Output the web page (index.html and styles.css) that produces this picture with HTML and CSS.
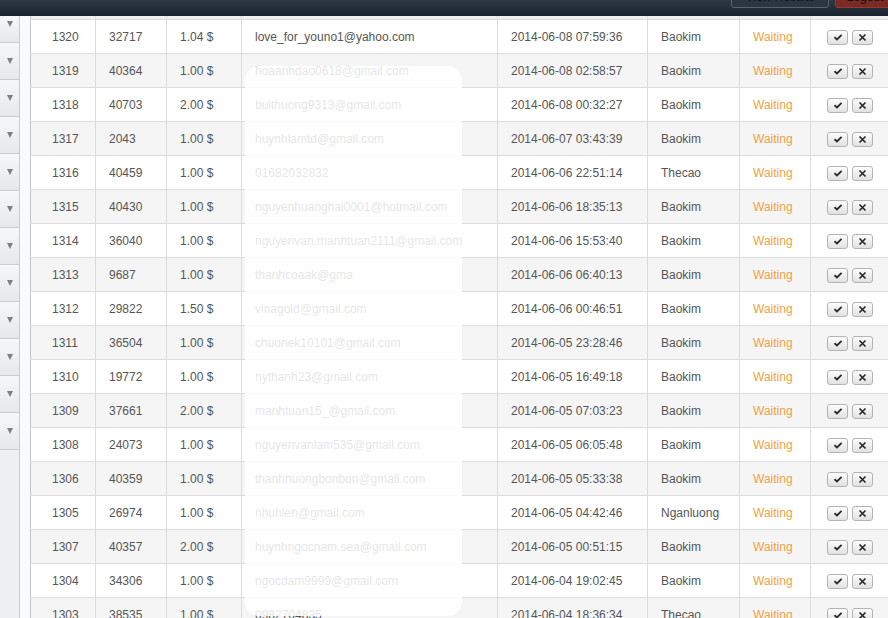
FILE: index.html
```html
<!DOCTYPE html>
<html lang="en">
<head>
  <meta charset="UTF-8">
  <title>Orders</title>
  <link rel="stylesheet" href="styles.css">
</head>
<body>
  <div class="topbar">
    <button class="top-btn view">View Results</button>
    <button class="top-btn logout">Logout</button>
  </div>

  <div class="main">
    <div class="sidebar">
      <div class="side-item first"><span class="arrow"></span></div>
      <div class="side-item"><span class="arrow"></span></div>
      <div class="side-item"><span class="arrow"></span></div>
      <div class="side-item"><span class="arrow"></span></div>
      <div class="side-item"><span class="arrow"></span></div>
      <div class="side-item"><span class="arrow"></span></div>
      <div class="side-item"><span class="arrow"></span></div>
      <div class="side-item"><span class="arrow"></span></div>
      <div class="side-item"><span class="arrow"></span></div>
      <div class="side-item"><span class="arrow"></span></div>
      <div class="side-item"><span class="arrow"></span></div>
      <div class="side-item"><span class="arrow"></span></div>
    </div>

    <div class="content">
      <table class="orders">
        <colgroup>
          <col style="width:65px">
          <col style="width:71px">
          <col style="width:75px">
          <col style="width:256px">
          <col style="width:150px">
          <col style="width:92px">
          <col style="width:71px">
          <col style="width:90px">
        </colgroup>
        <thead>
          <tr><th></th><th></th><th></th><th></th><th></th><th></th><th></th><th></th></tr>
        </thead>
        <tbody id="rows"></tbody>
      </table>
    </div>
  </div>

  <div class="privacy"></div>

  <script>
    const orders = [
      ['1320', '32717', '1.04 $', 'love_for_youno1@yahoo.com', '2014-06-08 07:59:36', 'Baokim'],
      ['1319', '40364', '1.00 $', 'hoaanhdao0618@gmail.com', '2014-06-08 02:58:57', 'Baokim'],
      ['1318', '40703', '2.00 $', 'buithuong9313@gmail.com', '2014-06-08 00:32:27', 'Baokim'],
      ['1317', '2043', '1.00 $', 'huynhlamtd@gmail.com', '2014-06-07 03:43:39', 'Baokim'],
      ['1316', '40459', '1.00 $', '01682032832', '2014-06-06 22:51:14', 'Thecao'],
      ['1315', '40430', '1.00 $', 'nguyenhuanghai0001@hotmail.com', '2014-06-06 18:35:13', 'Baokim'],
      ['1314', '36040', '1.00 $', 'nguyenvan.manhtuan2111@gmail.com', '2014-06-06 15:53:40', 'Baokim'],
      ['1313', '9687', '1.00 $', 'thanhcoaak@gma', '2014-06-06 06:40:13', 'Baokim'],
      ['1312', '29822', '1.50 $', 'vinagold@gmail.com', '2014-06-06 00:46:51', 'Baokim'],
      ['1311', '36504', '1.00 $', 'chuonek10101@gmail.com', '2014-06-05 23:28:46', 'Baokim'],
      ['1310', '19772', '1.00 $', 'nythanh23@gmail.com', '2014-06-05 16:49:18', 'Baokim'],
      ['1309', '37661', '2.00 $', 'manhtuan15_@gmail.com', '2014-06-05 07:03:23', 'Baokim'],
      ['1308', '24073', '1.00 $', 'nguyenvanlam535@gmail.com', '2014-06-05 06:05:48', 'Baokim'],
      ['1306', '40359', '1.00 $', 'thanhhuongbonbon@gmail.com', '2014-06-05 05:33:38', 'Baokim'],
      ['1305', '26974', '1.00 $', 'nhuhien@gmail.com', '2014-06-05 04:42:46', 'Nganluong'],
      ['1307', '40357', '2.00 $', 'huynhngocnam.sea@gmail.com', '2014-06-05 00:51:15', 'Baokim'],
      ['1304', '34306', '1.00 $', 'ngocdam9999@gmail.com', '2014-06-04 19:02:45', 'Baokim'],
      ['1303', '38535', '1.00 $', '0982704835', '2014-06-04 18:36:34', 'Thecao']
    ];

    const checkIcon = '<svg width="10" height="8" viewBox="0 0 10 8"><path d="M1.5 4.2 L4 6.4 L8.6 1.8" fill="none" stroke="#2b2b2b" stroke-width="1.8"/></svg>';
    const crossIcon = '<svg width="9" height="9" viewBox="0 0 9 9"><path d="M1.5 1.5 L7.5 7.5 M7.5 1.5 L1.5 7.5" fill="none" stroke="#2b2b2b" stroke-width="1.7"/></svg>';

    const tbody = document.getElementById('rows');
    orders.forEach(order => {
      const tr = document.createElement('tr');
      tr.innerHTML =
        '<td class="id">' + order[0] + '</td>' +
        '<td>' + order[1] + '</td>' +
        '<td>' + order[2] + '</td>' +
        '<td>' + order[3] + '</td>' +
        '<td>' + order[4] + '</td>' +
        '<td>' + order[5] + '</td>' +
        '<td class="status">Waiting</td>' +
        '<td class="actions"><span class="act-group"><button class="act">' + checkIcon + '</button><button class="act">' + crossIcon + '</button></span></td>';
      tbody.appendChild(tr);
    });
  </script>
</body>
</html>
```

FILE: styles.css
```css
body {
  margin: 0;
  font-family: "Liberation Sans", Arial, sans-serif;
  font-size: 12px;
  color: #555;
  background: #fafafa;
  overflow: hidden;
  height: 618px;
}
.topbar {
  height: 16px;
  background: linear-gradient(#2e3946, #1a2330);
  display: flex;
  justify-content: flex-end;
  align-items: flex-end;
  gap: 6px;
  overflow: hidden;
}
.top-btn {
  height: 24px;
  margin-bottom: 8px;
  border-radius: 3px;
  font-family: "Liberation Sans", Arial, sans-serif;
  font-size: 12px;
  color: #0d1117;
  padding: 2px 10px 0;
  line-height: 12px;
}
.view {
  width: 98px;
  background: #2c3642;
  border: 1px solid #56616e;
}
.logout {
  width: 60px;
  margin-right: -7px;
  background: #7a2b24;
  border: 1px solid #96392f;
}
.main {
  display: flex;
  height: 602px;
}
.sidebar {
  width: 19px;
  border-right: 1px solid #c9cdd2;
  background: #eef0f2;
  flex-shrink: 0;
}
.side-item {
  height: 36px;
  border-bottom: 1px solid #c9cdd2;
  background: linear-gradient(#f6f7f8, #e6e8ea);
  display: flex;
  justify-content: center;
  align-items: flex-end;
}
.side-item.first {
  height: 26px;
}
.arrow {
  width: 0;
  height: 0;
  border-left: 3.5px solid transparent;
  border-right: 3.5px solid transparent;
  border-top: 6px solid #7b8087;
  margin-bottom: 15px;
}
.content {
  padding-left: 10px;
  flex: 1;
}
.orders {
  border-collapse: collapse;
  table-layout: fixed;
  width: 870px;
  border-left: 1px solid #c4c4c4;
  background: #fff;
}
.orders th {
  height: 3px;
  padding: 0;
  background: #f0f0f0;
  border-right: 1px solid #dcdcdc;
  border-bottom: 1px solid #dcdcdc;
}
.orders td {
  height: 33px;
  padding: 0 0 0 13px;
  line-height: 14px;
  border-right: 1px solid #dcdcdc;
  border-bottom: 1px solid #dcdcdc;
  white-space: nowrap;
  overflow: hidden;
  vertical-align: middle;
}
.orders tbody tr:nth-child(even) td {
  background: #f5f5f5;
}
.orders td.id {
  padding-left: 21px;
}
.orders td.status {
  color: #f0a23e;
}
.orders td.actions {
  padding-left: 16px;
}
.act-group {
  display: flex;
  gap: 4px;
  padding-top: 1px;
}
.act {
  width: 21px;
  height: 15px;
  padding: 0;
  border: 1px solid #b4b4b4;
  border-radius: 3px;
  background: linear-gradient(#fdfdfd, #e1e1e1);
  display: flex;
  align-items: center;
  justify-content: center;
}
.privacy {
  position: absolute;
  left: 245px;
  top: 66px;
  width: 217px;
  height: 550px;
  border-radius: 14px;
  background: rgba(255, 255, 255, 0.85);
  backdrop-filter: blur(0.7px);
}
```
